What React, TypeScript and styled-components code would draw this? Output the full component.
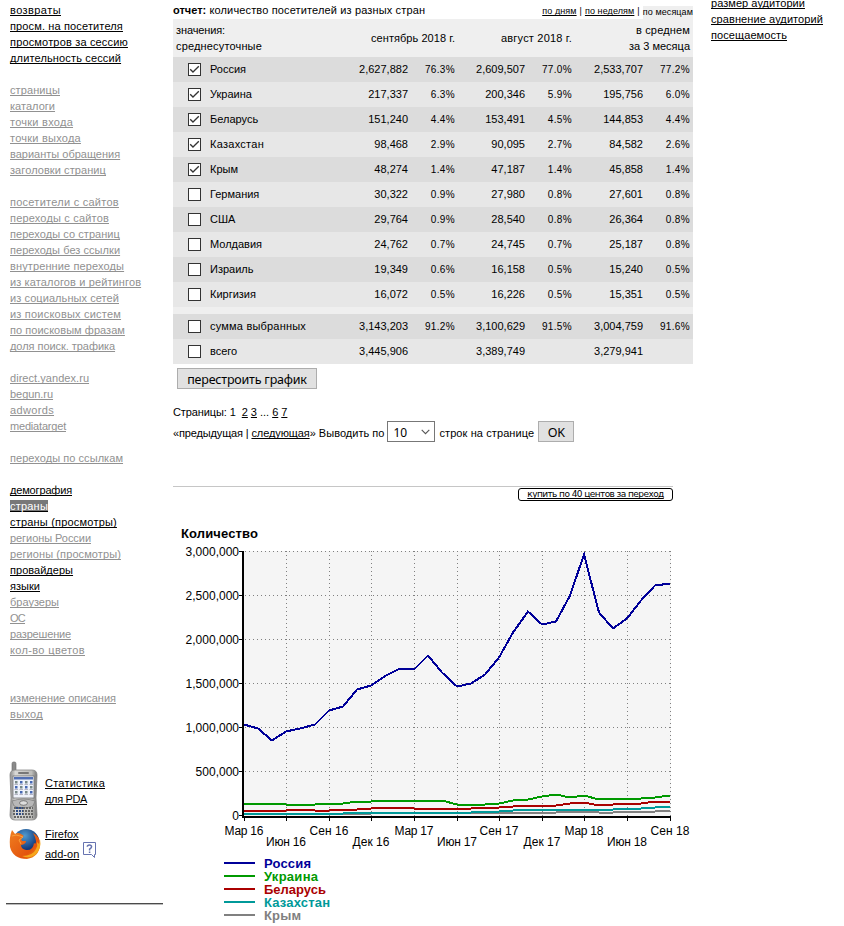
import React from "react";
import styled, { createGlobalStyle, css } from "styled-components";

const Global = createGlobalStyle`
  body { margin: 0; background: #fff; }
  * { box-sizing: border-box; }
`;

const Page = styled.div`
  display: grid;
  grid-template-columns: 173px 520px 1fr;
  width: 844px;
  height: 926px;
  overflow: hidden;
  font: 11px/16px "Liberation Sans", Arial, sans-serif;
  color: #000;
  white-space: nowrap;
`;

const Sidebar = styled.nav`
  padding-left: 10px;
  padding-top: 2px;
`;

const NavList = styled.div`
  display: flex;
  flex-direction: column;
  align-items: flex-start;
`;

const Gap = styled.div`
  height: 16px;
`;

const Link = styled.a<{ $tone?: "muted" | "current"; $track?: number }>`
  color: ${(p) => (p.$tone === "muted" ? "#919191" : "#000")};
  letter-spacing: ${(p) => p.$track ?? 0}px;
  text-decoration: underline;
  text-decoration-thickness: 1px;
  text-underline-offset: 1px;
  text-decoration-skip-ink: none;
  ${(p) =>
    p.$tone === "current" &&
    css`
      color: #fff;
      background: #787878;
      text-decoration-color: #000;
      line-height: 12px;
      margin: 2px 0;
    `}
`;

const Text = styled.span<{ $track?: number }>`
  letter-spacing: ${(p) => p.$track ?? 0}px;
  white-space: pre;
`;

const Promo = styled.div<{ $top: number }>`
  display: flex;
  align-items: flex-start;
  margin-top: ${(p) => p.$top}px;
  margin-left: -1px;
`;

const PromoLines = styled.div<{ $left: number; $top: number; $gap: number }>`
  display: flex;
  flex-direction: column;
  align-items: flex-start;
  gap: ${(p) => p.$gap}px;
  margin-left: ${(p) => p.$left}px;
  margin-top: ${(p) => p.$top}px;
`;

const PromoRow = styled.div`
  display: flex;
  gap: 4px;
  height: 16px;
`;

const HelpIcon = styled.svg`
  margin-top: -4px;
`;

const SidebarRule = styled.div`
  width: 157px;
  height: 2px;
  margin: 41px 0 0 -4px;
  background: #4a4a4a;
  border-bottom: 1px solid #bbb;
`;

const Main = styled.main`
  display: flex;
  flex-direction: column;
`;

const TitleBar = styled.header`
  display: flex;
  justify-content: space-between;
  height: 19px;
  padding-top: 2px;
`;

const Periods = styled.div`
  display: flex;
  gap: 3px;
  font-size: 9px;
  line-height: 18px;
`;

const CurrentPeriod = styled.span`
  height: 13px;
  margin-top: 4px;
  line-height: 12px;
  background: #efefef;
  letter-spacing: 0.1px;
`;

const GRID = "37px 123px 75px 47px 70px 47px 71px 47px";

const TableHead = styled.div`
  display: grid;
  grid-template-columns: 160px 122px 117px 118px;
  align-items: center;
  height: 38px;
  background: #efefef;
`;

const HeadCell = styled.div<{ $left?: boolean }>`
  display: flex;
  flex-direction: column;
  align-items: ${(p) => (p.$left ? "flex-start" : "flex-end")};
  padding-left: ${(p) => (p.$left ? 3 : 0)}px;
`;

const TableRow = styled.div<{ $dark: boolean }>`
  display: grid;
  grid-template-columns: ${GRID};
  height: 25px;
  line-height: 25px;
  background: ${(p) => (p.$dark ? "#dcdcdc" : "#e7e7e7")};
`;

const Divider = styled.div`
  height: 7px;
  background: #efefef;
`;

const Num = styled.div`
  text-align: right;
`;

const Pct = styled.div`
  text-align: right;
  font-size: 10px;
  line-height: 26px;
  letter-spacing: 0.35px;
`;

const Box = styled.span`
  display: grid;
  place-items: center;
  width: 13px;
  height: 13px;
  margin: 6px 0 0 15px;
  border: 1px solid #333;
  background: #fff;
`;

const Button = styled.button<{ $w: number }>`
  display: flex;
  align-items: center;
  justify-content: center;
  width: ${(p) => p.$w}px;
  height: 21px;
  padding: 1px 0 0;
  border: 1px solid #adadad;
  border-radius: 0;
  background: #e1e1e1;
  color: #000;
  font: 12.5px "Noto Sans", "Open Sans", sans-serif;
  letter-spacing: -0.2px;
`;

const RebuildRow = styled.div`
  padding: 4px 0 0 4px;
`;

const Pages = styled.div`
  display: flex;
  gap: 3px;
  margin-top: 15px;
`;

const Pager = styled.div`
  display: flex;
  align-items: center;
  height: 21px;
  margin-top: 1px;
`;

const PagerText = styled(Text)`
  padding-top: 3px;
`;

const PagerLink = styled(Link)`
  padding-top: 3px;
`;

const Select = styled.div`
  display: flex;
  align-items: center;
  justify-content: space-between;
  width: 48px;
  height: 21px;
  margin: 0 4px 0 3px;
  padding: 1px 4px 0 5px;
  border: 1px solid #777;
  font: 12px "Noto Sans", sans-serif;
`;

const OkSlot = styled.div`
  margin-left: 4px;
`;

const AdBar = styled.div`
  display: flex;
  justify-content: flex-end;
  width: 500px;
  height: 29px;
  margin-top: 44px;
  padding-top: 1px;
  border-top: 1px solid #c6c6c6;
`;

const AdLink = styled.a`
  width: 155px;
  height: 13px;
  border: 1px solid #000;
  border-radius: 3px;
  font: 9px/11px "DejaVu Sans", sans-serif;
  letter-spacing: -0.58px;
  text-align: center;
  text-decoration: underline;
  text-underline-offset: 1px;
  text-decoration-thickness: 1px;
  text-decoration-skip-ink: none;
`;

const Aside = styled.aside`
  display: flex;
  flex-direction: column;
  align-items: flex-start;
  margin: -5px 0 0 18px;
`;

type Item = [string, number, ("muted" | "current")?] | null;

const nav: Item[] = [
  ["возвраты", 0.43], ["просм. на посетителя", 0.14], ["просмотров за сессию", 0.17], ["длительность сессий", 0.15],
  null,
  ["страницы", 0.1, "muted"], ["каталоги", 0.03, "muted"], ["точки входа", 0.26, "muted"], ["точки выхода", 0.24, "muted"],
  ["варианты обращения", 0, "muted"], ["заголовки страниц", 0.08, "muted"],
  null,
  ["посетители с сайтов", 0.26, "muted"], ["переходы с сайтов", 0.18, "muted"], ["переходы со страниц", 0.06, "muted"],
  ["переходы без ссылки", 0.05, "muted"], ["внутренние переходы", 0.12, "muted"], ["из каталогов и рейтингов", 0.12, "muted"],
  ["из социальных сетей", 0.07, "muted"], ["из поисковых систем", 0.21, "muted"], ["по поисковым фразам", 0.04, "muted"],
  ["доля поиск. трафика", -0.05, "muted"],
  null,
  ["direct.yandex.ru", 0.05, "muted"], ["begun.ru", -0.05, "muted"], ["adwords", 0.35, "muted"], ["mediatarget", -0.19, "muted"],
  null,
  ["переходы по ссылкам", 0.06, "muted"],
  null,
  ["демография", -0.16], ["страны", 0.21, "current"], ["страны (просмотры)", 0.2], ["регионы России", -0.06, "muted"],
  ["регионы (просмотры)", 0.1, "muted"], ["провайдеры", 0.03], ["языки", 0.03], ["браузеры", 0, "muted"],
  ["ОС", -0.75, "muted"], ["разрешение", -0.17, "muted"], ["кол-во цветов", 0.35, "muted"],
  null, null,
  ["изменение описания", -0.03, "muted"], ["выход", 0.32, "muted"],
];

const countries: string[][] = [
  ["Россия", "2,627,882", "76.3%", "2,609,507", "77.0%", "2,533,707", "77.2%"],
  ["Украина", "217,337", "6.3%", "200,346", "5.9%", "195,756", "6.0%"],
  ["Беларусь", "151,240", "4.4%", "153,491", "4.5%", "144,853", "4.4%"],
  ["Казахстан", "98,468", "2.9%", "90,095", "2.7%", "84,582", "2.6%"],
  ["Крым", "48,274", "1.4%", "47,187", "1.4%", "45,858", "1.4%"],
  ["Германия", "30,322", "0.9%", "27,980", "0.8%", "27,601", "0.8%"],
  ["США", "29,764", "0.9%", "28,540", "0.8%", "26,364", "0.8%"],
  ["Молдавия", "24,762", "0.7%", "24,745", "0.7%", "25,187", "0.8%"],
  ["Израиль", "19,349", "0.6%", "16,158", "0.5%", "15,240", "0.5%"],
  ["Киргизия", "16,072", "0.5%", "16,226", "0.5%", "15,351", "0.5%"],
];
const totals: string[][] = [
  ["сумма выбранных", "3,143,203", "91.2%", "3,100,629", "91.5%", "3,004,759", "91.6%"],
  ["всего", "3,445,906", "", "3,389,749", "", "3,279,941", ""],
];
const nameTrack: Record<string, number> = { "Казахстан": 0.27, "сумма выбранных": 0.2 };

function Row({ cells, dark, checked }: { cells: string[]; dark: boolean; checked?: boolean }) {
  return (
    <TableRow $dark={dark}>
      <Box>
        {checked && (
          <svg width="11" height="11" viewBox="0 0 11 11">
            <path d="M1.2 5.2 4 8 9.8 2.2" fill="none" stroke="#333" strokeWidth="1.3" />
          </svg>
        )}
      </Box>
      <Text $track={nameTrack[cells[0]] ?? 0}>{cells[0]}</Text>
      {cells.slice(1).map((c, i) => (i % 2 ? <Pct key={i}>{c}</Pct> : <Num key={i}>{c}</Num>))}
    </TableRow>
  );
}

function Phone() {
  return (
    <svg width="29" height="60" viewBox="0 0 29 60">
      <defs>
        <linearGradient id="body" x1="0" x2="1">
          <stop offset="0" stopColor="#8a8a8a" /><stop offset=".2" stopColor="#d8d8d6" />
          <stop offset=".8" stopColor="#bdbdba" /><stop offset="1" stopColor="#777" />
        </linearGradient>
      </defs>
      <rect x="3" y="1" width="4" height="12" rx="1.5" fill="#8a8a8a" stroke="#666" strokeWidth=".6" />
      <path d="M1 14Q1 9 6 9H23Q28 9 28 14L27 37 28 54Q28 59 23 59H6Q1 59 1 54L2 37Z" fill="url(#body)" stroke="#888" strokeWidth=".8" />
      <rect x="9" y="11" width="11" height="2" rx="1" fill="#777" />
      <rect x="4" y="15" width="21" height="22" fill="#eef2fa" stroke="#666" strokeWidth=".7" />
      <rect x="5" y="16" width="19" height="2.5" fill="#5270b4" />
      {[20, 25, 30].map((y) => [6, 11, 16, 21].map((x) => (
        <g key={`${x}-${y}`}>
          <rect x={x} y={y} width="2.5" height="2.5" fill={(x + y) % 2 ? "#4668b3" : "#788"} />
          <rect x={x - 0.5} y={y + 3} width="3.5" height=".7" fill="#99a" />
        </g>
      )))}
      <path d="M3 40Q14 36 26 40L24 45Q14 49 5 45Z" fill="#b8b8b8" stroke="#777" strokeWidth=".7" />
      <ellipse cx="14.5" cy="42" rx="4" ry="2.3" fill="#ddd" stroke="#555" strokeWidth=".7" />
      <path d="M5 47H24M4 50H25M4 53H25M5 56H24" stroke="#666" strokeWidth="1.8" strokeDasharray="2 1" />
      <path d="M7 47H14M7 50H14M7 53H14" stroke="#2f4d86" strokeWidth="1.8" strokeDasharray="2 1" />
    </svg>
  );
}

function Firefox() {
  return (
    <svg width="33" height="32" viewBox="0 -1 33 32">
      <defs>
        <radialGradient id="globe" cx=".45" cy=".25">
          <stop offset="0" stopColor="#4f9bd0" /><stop offset="1" stopColor="#123a7c" />
        </radialGradient>
        <linearGradient id="fox" x1="0" x2="1" y2="1">
          <stop offset="0" stopColor="#f08020" /><stop offset=".7" stopColor="#e3540e" /><stop offset="1" stopColor="#f4a51c" />
        </linearGradient>
      </defs>
      <circle cx="17" cy="14.5" r="13.5" fill="url(#globe)" />
      <path d="M3 2 6 6Q9 4 12 6L15 8Q11 10 13 13L17 13Q17 16 12 17 12 21 17 22 24 23 25 15 27 17 27 13 26 8 24 5 31 8 31 17 30 29 18 31 4 31 1 19 0 9 3 2Z" fill="url(#fox)" />
      <path d="M31 11Q33 21 26 27 20 31 13 28 24 28 27 21 29 18 28 14L30 16Z" fill="#f6a71c" />
      <path d="M3 8Q7 6 11 8L14 9 10 12 12 16" fill="none" stroke="#f9a03a" />
    </svg>
  );
}

const quarterX = [244, 286, 329, 371, 414, 457, 499, 542, 584, 627, 670];
const quarterLabels = ["Мар 16", "Июн 16", "Сен 16", "Дек 16", "Мар 17", "Июн 17", "Сен 17", "Дек 17", "Мар 18", "Июн 18", "Сен 18"];
const yLabels = ["3,000,000", "2,500,000", "2,000,000", "1,500,000", "1,000,000", "500,000", "0"];
const monthX = Array.from({ length: 31 }, (_, i) => Math.floor(244 + i * 14.2));

const series = [
  { name: "Крым", w: 37, color: "#808080", y: [813, 813, 813, 813, 813, 813, 813, 813, 813, 813, 812, 812, 812, 812, 812, 812, 812, 812, 812, 812, 812, 812, 812, 811, 811, 812, 812, 811, 811, 811, 810] },
  { name: "Казахстан", w: 66, color: "#009999", y: [813, 813, 813, 813, 813, 813, 813, 813, 812, 812, 812, 812, 812, 812, 812, 812, 812, 811, 811, 810, 809, 809, 809, 809, 809, 809, 809, 808, 808, 807, 806] },
  { name: "Беларусь", w: 62, color: "#aa0000", y: [810, 810, 810, 810, 809, 810, 810, 809, 809, 808, 807, 807, 808, 808, 808, 808, 808, 807, 807, 806, 805, 805, 805, 803, 802, 805, 804, 803, 803, 801, 801] },
  { name: "Украина", w: 54, color: "#009900", y: [803, 804, 803, 804, 804, 804, 803, 803, 801, 801, 800, 800, 801, 800, 800, 804, 805, 804, 803, 800, 799, 796, 794, 797, 795, 799, 798, 799, 798, 797, 795] },
  { name: "Россия", w: 47, color: "#000099", y: [724, 728, 740, 731, 728, 724, 710, 706, 689, 685, 675, 668, 669, 655, 672, 686, 683, 674, 657, 632, 611, 624, 621, 595, 554, 612, 628, 618, 600, 585, 583] },
];

const ChartSvg = styled.svg`
  display: block;
  font: 12px "Liberation Sans", Arial, sans-serif;
`;

function Chart() {
  return (
    <ChartSvg width="520" height="411" viewBox="173 515 520 411">
      <rect x="244" y="551" width="427" height="265" fill="#f5f5f5" />
      <text x="181" y="538" fontSize="13" fontWeight="bold" textLength="77">Количество</text>
      <g shapeRendering="crispEdges" stroke="#808080" strokeDasharray="1 3">
        {[0, 1, 2, 3, 4, 5].map((i) => <path key={i} d={`M245 ${551.5 + i * 44}H671`} />)}
        {quarterX.slice(1).map((x) => <path key={x} d={`M${x + 0.5} 551V816`} />)}
      </g>
      {series.map((s) => (
        <polyline key={s.name} points={s.y.map((y, i) => `${monthX[i]},${y + 0.5}`).join(" ")} fill="none" stroke={s.color} strokeWidth="2" shapeRendering="crispEdges" />
      ))}
      <g fill="#000" shapeRendering="crispEdges">
        <rect x="242" y="551" width="2" height="267" />
        <rect x="242" y="816" width="429" height="2" />
        {yLabels.map((l, i) => <rect key={l} x="239" y={551 + i * 44} width="4" height="1" />)}
        {quarterX.map((x) => <rect key={x} x={x} y="817" width="1" height="4" />)}
      </g>
      {yLabels.map((l, i) => <text key={l} x="239" y={556 + i * 44} textAnchor="end">{l}</text>)}
      {quarterLabels.map((l, i) => (
        <text key={l} x={quarterX[i]} y={i % 2 ? 846 : 835} textAnchor="middle" textLength={l.startsWith("Дек") ? 37 : i % 2 ? 40 : 39}>{l}</text>
      ))}
      {[...series].reverse().map((s, i) => (
        <g key={s.name} fill={s.color}>
          <rect x="224" y={862 + i * 13} width="31" height="2" />
          <text x="264" y={868 + i * 13} fontSize="13" fontWeight="bold" textLength={s.w}>{s.name}</text>
        </g>
      ))}
    </ChartSvg>
  );
}

export default function App() {
  return (
    <>
      <Global />
      <Page>
        <Sidebar>
          <NavList>
            {nav.map((n, i) => (n ? <Link key={i} $track={n[1]} $tone={n[2]}>{n[0]}</Link> : <Gap key={i} />))}
          </NavList>
          <Promo $top={39}>
            <Phone />
            <PromoLines $left={7} $top={14} $gap={0}>
              <Link $track={0.22}>Статистика</Link>
              <Link $track={-0.35}>для PDA</Link>
            </PromoLines>
          </Promo>
          <Promo $top={6}>
            <Firefox />
            <PromoLines $left={3} $top={-1} $gap={4}>
              <Link>Firefox</Link>
              <PromoRow>
                <Link>add-on</Link>
                <HelpIcon width="14" height="17" viewBox="0 0 14 17" fill="none" stroke="#6673b0">
                  <path d="M.5 .5H12.5V12.5H11.5V15.5L8.5 12.5H.5Z" />
                  <path d="M4.3 4.8Q4.3 3 6.4 3T8.6 4.8Q8.6 6 6.6 7.2V8.6M6.6 9.6V11" strokeWidth="1.5" />
                </HelpIcon>
              </PromoRow>
            </PromoLines>
          </Promo>
          <SidebarRule />
        </Sidebar>
        <Main>
          <TitleBar>
            <span><b>отчет:</b><Text $track={0.14}> количество посетителей из разных стран</Text></span>
            <Periods>
              <Link $track={0.1}>по дням</Link>|<Link $track={0.1}>по неделям</Link>|<CurrentPeriod>по месяцам</CurrentPeriod>
            </Periods>
          </TitleBar>
          <TableHead>
            <HeadCell $left><Text $track={-0.12}>значения:</Text><Text $track={0.16}>среднесуточные</Text></HeadCell>
            <HeadCell><Text $track={0.05}>сентябрь 2018 г.</Text></HeadCell>
            <HeadCell><Text $track={0.2}>август 2018 г.</Text></HeadCell>
            <HeadCell><Text $track={0.16}>в среднем</Text><Text>за 3 месяца</Text></HeadCell>
          </TableHead>
          {countries.map((c, i) => <Row key={c[0]} cells={c} dark={i % 2 === 0} checked={i < 5} />)}
          <Divider />
          {totals.map((c, i) => <Row key={c[0]} cells={c} dark={i === 0} />)}
          <RebuildRow><Button $w={140}>перестроить график</Button></RebuildRow>
          <Pages>
            <Text $track={-0.1}>{"Страницы: 1 "}</Text><Link>2</Link><Link>3</Link>...<Link>6</Link><Link>7</Link>
          </Pages>
          <Pager>
            <PagerText $track={-0.14}>{"«предыдущая | "}</PagerText>
            <PagerLink $track={-0.1}>следующая</PagerLink>
            <PagerText $track={0.02}>» Выводить по</PagerText>
            <Select>
              10
              <svg width="9" height="6" viewBox="0 0 9 6"><path d="M.7 .8 4.5 4.6 8.3 .8" fill="none" stroke="#555" strokeWidth="1.1" /></svg>
            </Select>
            <PagerText $track={0.1}>строк на странице</PagerText>
            <OkSlot><Button $w={36}>OK</Button></OkSlot>
          </Pager>
          <AdBar><AdLink>купить по 40 центов за переход</AdLink></AdBar>
          <Chart />
        </Main>
        <Aside>
          <Link $track={0.05}>размер аудитории</Link>
          <Link $track={0.09}>сравнение аудиторий</Link>
          <Link $track={0.09}>посещаемость</Link>
        </Aside>
      </Page>
    </>
  );
}
